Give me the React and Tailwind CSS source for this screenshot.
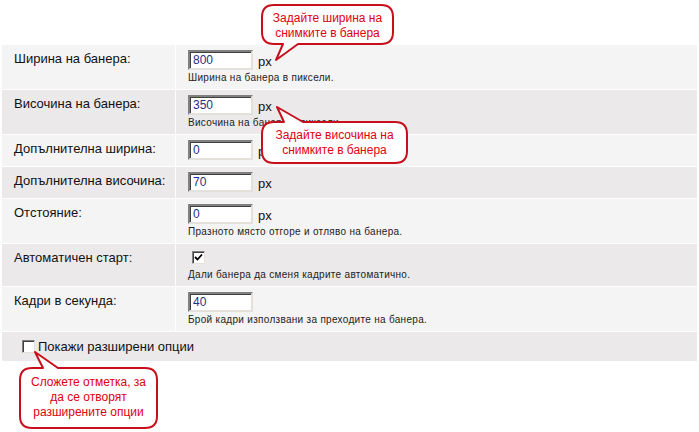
import React from 'react';

const rows = [
  { label: 'Ширина на банера:', value: '800', unit: 'px', help: 'Ширина на банера в пиксели.' },
  { label: 'Височина на банера:', value: '350', unit: 'px', help: 'Височина на банера в пиксели.' },
  { label: 'Допълнителна ширина:', value: '0', unit: 'px' },
  { label: 'Допълнителна височина:', value: '70', unit: 'px' },
  { label: 'Отстояние:', value: '0', unit: 'px', help: 'Празното място отгоре и отляво на банера.' },
  { label: 'Автоматичен старт:', check: true, help: 'Дали банера да сменя кадрите автоматично.' },
  { label: 'Кадри в секунда:', value: '40', help: 'Брой кадри използвани за преходите на банера.' },
];

const TextBox = ({ value }) => (
  <div className="w-[65px] h-[20px] border-2 border-t-[#808080] border-l-[#808080] border-r-[#e4e1dc] border-b-[#e4e1dc] bg-white shadow-[inset_1px_1px_0_#404040] pl-[3px] text-[12px] leading-[16px] text-[#1f2f86]">
    {value}
  </div>
);

const Box = ({ checked }) => (
  <div className="w-[13px] h-[13px] border border-t-[#808080] border-l-[#808080] border-r-[#e4e1dc] border-b-[#e4e1dc] bg-white shadow-[inset_1px_1px_0_#404040] flex items-center justify-center">
    {checked && (
      <svg width="9" height="9" viewBox="0 0 9 9">
        <path d="M1 4 L3.5 6.5 L8 1.5" fill="none" stroke="#000" strokeWidth="1.8" />
      </svg>
    )}
  </div>
);

const Callouts = () => (
  <svg className="absolute inset-0 pointer-events-none" width="699" height="432">
    <g fill="#fff" stroke="#c8101c" strokeWidth="2" strokeLinejoin="round">
      <path d="M274,5 H381 Q393,5 393,17 V32 Q393,44 381,44 H298 L276,60 L283,44 H274 Q262,44 262,32 V17 Q262,5 274,5 Z" />
      <path d="M274,122 H284 L277,107 L303,122 H395 Q407,122 407,134 V151 Q407,163 395,163 H274 Q262,163 262,151 V134 Q262,122 274,122 Z" />
      <path d="M32,368 H43 L35,352 L58,368 H145 Q157,368 157,380 V416 Q157,428 145,428 H32 Q20,428 20,416 V380 Q20,368 32,368 Z" />
    </g>
  </svg>
);

export default function App() {
  return (
    <div className="relative w-[699px] h-[432px] bg-white font-['Liberation_Sans',Arial,sans-serif] text-black">
      <div className="pt-[45px] px-[2px]">
        <div className="grid grid-cols-[173px_1fr] gap-px">
          {rows.map((r, i) => {
            const bg = i % 2 === 0 ? 'bg-[#f4f4f4]' : 'bg-[#ebe9ea]';
            return (
              <React.Fragment key={i}>
                <div className={`${bg} pl-[12px] pt-[5px] text-[13px] leading-[17px] text-[#111]`}>{r.label}</div>
                <div className={`${bg} pl-[12px] pt-[5px] ${r.help ? 'pb-[5px]' : 'pb-[6px]'}`}>
                  {r.check ? (
                    <div className="pt-[2px] pl-[4px] h-[18px]">
                      <Box checked />
                    </div>
                  ) : (
                    <div className="flex items-end gap-[5px]">
                      <TextBox value={r.value} />
                      {r.unit && <span className="text-[13px] leading-[17px] text-[#111]">{r.unit}</span>}
                    </div>
                  )}
                  {r.help && (
                    <div className="mt-[1px] text-[10px] leading-[13px] tracking-[0.3px] text-[#222]">{r.help}</div>
                  )}
                </div>
              </React.Fragment>
            );
          })}
          <div className="col-span-2 bg-[#ebe9ea] h-[29px] pl-[20px] flex items-center gap-[3px] text-[13px] text-[#111]">
            <Box />
            <span>Покажи разширени опции</span>
          </div>
        </div>
      </div>

      <Callouts />

      <div className="absolute left-[262px] top-[11px] w-[131px] text-center text-[12px] leading-[15px] text-[#e00010]">
        Задайте ширина на
        <br />
        снимките в банера
      </div>
      <div className="absolute left-[262px] top-[128px] w-[145px] text-center text-[12px] leading-[15px] text-[#e00010]">
        Задайте височина на
        <br />
        снимките в банера
      </div>
      <div className="absolute left-[20px] top-[375px] w-[137px] text-center text-[12px] leading-[15px] text-[#e00010]">
        Сложете отметка, за
        <br />
        да се отворят
        <br />
        разширените опции
      </div>
    </div>
  );
}
